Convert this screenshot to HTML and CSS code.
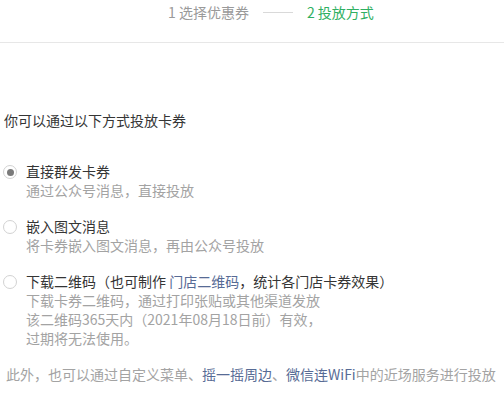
FILE: index.html
```html
<!DOCTYPE html>
<html lang="zh-CN">
<head>
  <meta charset="UTF-8">
  <title>投放方式</title>
  <link rel="stylesheet" href="styles.css">
</head>
<body>
  <div class="steps">
    <span class="step">1 选择优惠券</span>
    <span class="step-line"></span>
    <span class="step current">2 投放方式</span>
  </div>

  <div class="content">
    <div class="lead">你可以通过以下方式投放卡券</div>

    <div class="options">
      <label class="option">
        <span class="radio checked"></span>
        <div class="option-body">
          <div class="option-title">直接群发卡券</div>
          <div class="option-desc">通过公众号消息，直接投放</div>
        </div>
      </label>
      <label class="option">
        <span class="radio"></span>
        <div class="option-body">
          <div class="option-title">嵌入图文消息</div>
          <div class="option-desc">将卡券嵌入图文消息，再由公众号投放</div>
        </div>
      </label>
      <label class="option">
        <span class="radio"></span>
        <div class="option-body">
          <div class="option-title">下载二维码（也可制作 <a class="link" href="#">门店二维码</a>，统计各门店卡券效果）</div>
          <div class="option-desc">下载卡券二维码，通过打印张贴或其他渠道发放<br>该二维码365天内（2021年08月18日前）有效，<br>过期将无法使用。</div>
        </div>
      </label>
    </div>

    <div class="footnote">此外，也可以通过自定义菜单、<a class="link" href="#">摇一摇周边</a>、<a class="link" href="#">微信连WiFi</a>中的近场服务进行投放</div>
  </div>
</body>
</html>
```

FILE: styles.css
```css
body {
  margin: 0;
  background: #fff;
  color: #353535;
  font-family: "Noto Sans CJK SC", "Noto Sans", sans-serif;
  font-size: 14px;
  line-height: 19px;
}
.steps {
  display: flex;
  align-items: center;
  height: 43px;
  padding: 0 0 17px 168px;
  border-bottom: 1px solid #e7e7e7;
  box-sizing: border-box;
}
.step {
  color: #9a9a9a;
}
.step.current {
  color: #2fb062;
}
.step-line {
  width: 30px;
  height: 1px;
  background: #d9d9d9;
  margin: 0 14px;
}
.content {
  padding: 0 4px;
}
.lead {
  margin-top: 68px;
}
.options {
  margin-top: 32px;
}
.option {
  display: flex;
  align-items: flex-start;
  margin-bottom: 17px;
  cursor: pointer;
}
.radio {
  flex: none;
  width: 12px;
  height: 12px;
  border: 1px solid #d2d2d2;
  border-radius: 50%;
  margin: 3px 9px 0 -1px;
  position: relative;
}
.radio.checked::after {
  content: "";
  position: absolute;
  left: 2.5px;
  top: 2.5px;
  width: 7px;
  height: 7px;
  border-radius: 50%;
  background: #7a7a7a;
}
.option-desc {
  color: #a3a3a3;
}
.link {
  color: #576b95;
  text-decoration: none;
}
.footnote {
  margin-top: 16px;
  padding-left: 2px;
  color: #a3a3a3;
}
```
